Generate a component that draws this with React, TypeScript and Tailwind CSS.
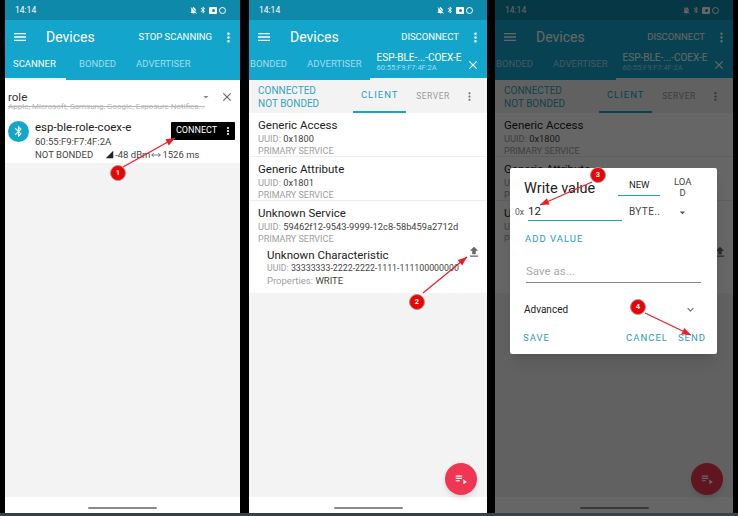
import React from 'react';
import { MoveHorizontal } from 'lucide-react';
import {
  MdMenu,
  MdMoreVert,
  MdClose,
  MdFileUpload,
  MdPlaylistPlay,
  MdNotificationsOff,
  MdBluetooth,
  MdSignalCellular4Bar,
  MdArrowDropDown,
  MdExpandMore,
} from 'react-icons/md';

const StatusBar = () => (
  <div className="h-5 shrink-0 bg-[#0f89aa] flex items-center pl-[10px] pr-[14px] text-white">
    <span className="text-[8.5px]">14:14</span>
    <div className="ml-auto flex items-center gap-[1px]">
      <MdNotificationsOff size={9} />
      <MdBluetooth size={8} />
      <div className="w-[8px] h-[7px] ml-[1px] bg-white rounded-[1px] flex items-center justify-center">
        <div className="w-[3px] h-[3px] rounded-full bg-[#0f89aa]" />
      </div>
      <div className="w-[7px] h-[7px] ml-[1px] rounded-full border border-white" />
    </div>
  </div>
);

const Toolbar = ({ action }: { action: string }) => (
  <div className="h-[31px] shrink-0 flex items-center text-white pl-[7px] pr-[2px] pt-[3px]">
    <MdMenu size={16} />
    <span className="ml-[18px] text-[14px]">Devices</span>
    <span className="ml-auto text-[9.5px] whitespace-nowrap">{action}</span>
    <MdMoreVert size={15} className="ml-[9px] mr-[2px]" />
  </div>
);

const ScannerTabs = () => (
  <div className="h-[29px] shrink-0 flex text-[9.5px] text-[#a3dcec]">
    <div className="w-[61px] border-b-2 border-[#eef3f5] flex items-center pl-[8px] text-white">SCANNER</div>
    <div className="ml-[13px] flex items-center pb-[2px]">BONDED</div>
    <div className="ml-[20px] flex items-center pb-[2px]">ADVERTISER</div>
  </div>
);

const DeviceTabs = () => (
  <div className="h-[29px] shrink-0 flex text-[9.5px] text-[#a3dcec]">
    <div className="ml-[1px] flex items-center pb-[2px]">BONDED</div>
    <div className="ml-[20px] flex items-center pb-[2px]">ADVERTISER</div>
    <div className="ml-[8px] flex-1 min-w-0 border-b-2 border-[#eef3f5] flex items-center pl-[7px] pr-[3px] text-white">
      <div className="flex flex-col leading-[10px] -mt-[3px] whitespace-nowrap text-[10px]">
        <span>ESP-BLE-...-COEX-E</span>
        <span className="text-[7.5px] text-[#a3dcec]">60:55:F9:F7:4F:2A</span>
      </div>
      <MdClose size={14} className="ml-auto mr-[4px] shrink-0" />
    </div>
  </div>
);

const NavArea = ({ children }: { children: React.ReactNode }) => (
  <div className="flex-1 flex flex-col min-h-0 bg-[#f3f3f3]">
    <div className="flex-1 flex flex-col min-h-0 relative">{children}</div>
    <div className="h-4 shrink-0 bg-white flex items-center justify-center pt-[5px]">
      <div className="w-[69px] h-[2px] bg-[#8c8c8c] rounded-full" />
    </div>
  </div>
);

const ScannerScreen = () => (
  <div className="w-[235px] h-full flex flex-col bg-[#14a5cc]">
    <StatusBar />
    <Toolbar action="STOP SCANNING" />
    <ScannerTabs />
    <NavArea>
      <div className="h-[34px] shrink-0 bg-white flex items-start pl-[3px] pr-[6px] pt-[11px]">
        <div className="flex flex-col">
          <span className="text-[11.5px] leading-[12px] text-[#333]">role</span>
          <span className="text-[8px] leading-[9px] -mt-[1px] text-[#b5b5b5] line-through w-[200px] truncate">
            Apple, Microsoft, Samsung, Google, Exposure Notifica...
          </span>
        </div>
        <MdArrowDropDown size={12} className="text-[#888] ml-[-8px]" />
        <MdClose size={14} className="ml-auto text-[#666] -mt-[1px]" />
      </div>
      <div className="h-[49px] shrink-0 bg-white flex items-start pl-[3px] pr-[5px] pt-[6px]">
        <div className="w-[21px] h-[21px] shrink-0 mt-[1px] rounded-full bg-[#14a5cc] flex items-center justify-center text-white">
          <MdBluetooth size={13} />
        </div>
        <div className="ml-[6px] w-[136px] shrink-0 flex flex-col text-[#444]">
          <span className="text-[11.5px] leading-[15px] text-[#222]">esp-ble-role-coex-e</span>
          <span className="text-[9.5px] leading-[12px] mt-[0.5px]">60:55:F9:F7:4F:2A</span>
          <div className="flex items-center text-[9.5px] leading-[12px] whitespace-nowrap mt-[1px]">
            <span>NOT BONDED</span>
            <MdSignalCellular4Bar size={9} className="ml-[12px] text-[#222] shrink-0" />
            <span className="ml-[1px]">-48 dBm</span>
            <MoveHorizontal size={10} strokeWidth={1.5} className="shrink-0 ml-[1px] text-[#333]" />
            <span className="ml-[1px]">1526 ms</span>
          </div>
        </div>
        <div className="ml-auto mt-[2px] w-[64px] h-[18px] shrink-0 bg-black rounded-[1px] flex items-center pl-[5px] text-white text-[9px]">
          CONNECT
          <MdMoreVert size={12} className="ml-auto mr-[1px]" />
        </div>
      </div>
    </NavArea>
  </div>
);

const Service = ({ name, uuid, border = true }: { name: string; uuid: string; border?: boolean }) => (
  <div className={`pl-[9px] pt-[5px] h-[44px] shrink-0 bg-white flex flex-col ${border ? 'border-b border-[#ececec]' : ''}`}>
    <span className="text-[11.5px] leading-[14px] text-[#222]">{name}</span>
    <span className="text-[9.3px] leading-[13px] text-[#a0a0a0] whitespace-nowrap">
      UUID: <span className="text-[#444]">{uuid}</span>
    </span>
    <span className="text-[9px] leading-[12px] text-[#a0a0a0]">PRIMARY SERVICE</span>
  </div>
);

const ClientScreen = () => (
  <div className="w-[238px] h-full flex flex-col bg-[#14a5cc] relative">
    <StatusBar />
    <Toolbar action="DISCONNECT" />
    <DeviceTabs />
    <NavArea>
      <div className="h-[33px] shrink-0 flex bg-[#f3f3f3] pl-[9px]">
        <div className="flex flex-col justify-center text-[10px] leading-[13px] text-[#35a3c2]">
          <span>CONNECTED</span>
          <span>NOT BONDED</span>
        </div>
        <div className="ml-[34px] w-[53px] border-b-2 border-[#14a5cc] flex items-center justify-center text-[9.5px] tracking-[1px] text-[#2a9dbc]">
          CLIENT
        </div>
        <div className="ml-[10px] flex items-center text-[8.5px] tracking-[0.5px] text-[#999]">SERVER</div>
        <MdMoreVert size={13} className="ml-[13px] mt-[10px] text-[#777]" />
      </div>
      <Service name="Generic Access" uuid="0x1800" />
      <Service name="Generic Attribute" uuid="0x1801" />
      <Service name="Unknown Service" uuid="59462f12-9543-9999-12c8-58b459a2712d" border={false} />
      <div className="h-[48px] shrink-0 bg-white pl-[18px] pt-[3px] flex flex-col relative">
        <span className="text-[11.5px] leading-[14px] text-[#222]">Unknown Characteristic</span>
        <span className="text-[8.8px] leading-[13px] text-[#a0a0a0] whitespace-nowrap">
          UUID: <span className="text-[#444]">33333333-2222-2222-1111-111100000000</span>
        </span>
        <span className="text-[9.5px] leading-[12px] text-[#a0a0a0]">
          Properties: <span className="text-[#444]">WRITE</span>
        </span>
        <MdFileUpload size={14} className="absolute right-[6px] top-[0px] text-[#666]" />
      </div>
      <div className="absolute right-[10px] bottom-[2px] w-8 h-8 rounded-full bg-[#ef3754] shadow-md flex items-center justify-center text-white">
        <MdPlaylistPlay size={14} />
      </div>
    </NavArea>
  </div>
);

const WriteDialog = () => (
  <div className="absolute left-[15px] top-[168px] w-[207px] h-[186px] bg-white rounded-[2px] shadow-lg flex flex-col text-[#222]">
    <div className="h-[31px] flex items-start shrink-0">
      <span className="ml-[14px] mt-[12px] text-[14.5px] leading-[18px] whitespace-nowrap">Write value</span>
      <div className="ml-[23px] mt-[7px] w-[42px] h-[21px] border-b border-[#14a5cc] flex items-center justify-center text-[9.5px]">NEW</div>
      <div className="ml-[9px] mt-[8px] w-[27px] text-center text-[9.5px] leading-[11px] text-[#444]">
        LOA
        <br />D
      </div>
    </div>
    <div className="h-[21px] flex shrink-0 mt-[1px]">
      <span className="ml-[5px] w-[13px] text-[8.5px] text-[#555] leading-[24px]">0x</span>
      <div className="w-[94px] border-b border-[#14a5cc] text-[11.5px] leading-[22px]">12</div>
      <span className="ml-[7px] text-[10px] leading-[24px] tracking-[0.4px] text-[#444]">BYTE..</span>
      <MdArrowDropDown size={13} className="ml-[16px] mt-[6px] text-[#555]" />
    </div>
    <span className="ml-[15px] mt-[12px] text-[9.5px] leading-[12px] tracking-[1px] text-[#2a9dbc] whitespace-nowrap">ADD VALUE</span>
    <div className="ml-[16px] mr-[16px] mt-[17px] h-[21px] border-b border-[#888] text-[11.5px] leading-[18px] text-[#aaa]">Save as...</div>
    <div className="flex items-center ml-[14px] mr-[20px] mt-[19px]">
      <span className="text-[10px]">Advanced</span>
      <MdExpandMore size={13} className="ml-auto text-[#666]" />
    </div>
    <div className="flex items-center ml-[13px] mr-[11px] mt-auto mb-[9px] text-[9.5px] tracking-[1px] text-[#2a9dbc]">
      <span>SAVE</span>
      <span className="ml-auto">CANCEL</span>
      <span className="ml-[10px]">SEND</span>
    </div>
  </div>
);

const DialogScreen = () => (
  <div className="relative h-full">
    <ClientScreen />
    <div className="absolute inset-0 bg-black/60" />
    <WriteDialog />
  </div>
);

const BADGES = [
  { n: 1, cls: 'left-[110px] top-[165px]' },
  { n: 2, cls: 'left-[409px] top-[294px]' },
  { n: 3, cls: 'left-[590px] top-[167px]' },
  { n: 4, cls: 'left-[630px] top-[299px]' },
];

const ARROWS = [
  [123, 167, 175, 138],
  [423, 293, 467, 257],
  [592, 182, 540, 205],
  [645, 313, 691, 335],
];

const Annotations = () => (
  <>
    <svg className="absolute inset-0 pointer-events-none" width={738} height={516}>
      {ARROWS.map(([x1, y1, x2, y2]) => {
        const a = Math.atan2(y2 - y1, x2 - x1);
        const p = (d: number, s: number) =>
          `${x2 - Math.cos(a) * d - Math.sin(a) * s},${y2 - Math.sin(a) * d + Math.cos(a) * s}`;
        return (
          <g key={x1}>
            <line x1={x1} y1={y1} x2={x2} y2={y2} stroke="#ee1c25" strokeWidth={1.2} />
            <polygon points={`${x2},${y2} ${p(9, 3.5)} ${p(9, -3.5)}`} fill="#ee1c25" />
          </g>
        );
      })}
    </svg>
    {BADGES.map(b => (
      <div
        key={b.n}
        className={`absolute ${b.cls} w-4 h-4 rounded-full bg-[#f00000] border border-[#999] flex items-center justify-center text-white text-[7.5px] font-bold`}
      >
        {b.n}
      </div>
    ))}
  </>
);

export default function App() {
  return (
    <div className="relative w-[738px] h-[516px] overflow-hidden bg-black font-['Roboto',sans-serif] flex flex-col">
      <div className="h-[513px] flex pl-[5px] gap-[9px]">
        <ScannerScreen />
        <ClientScreen />
        <div className="-ml-px">
          <DialogScreen />
        </div>
      </div>
      <div className="h-[3px] bg-[#3b4045]" />
      <Annotations />
    </div>
  );
}
